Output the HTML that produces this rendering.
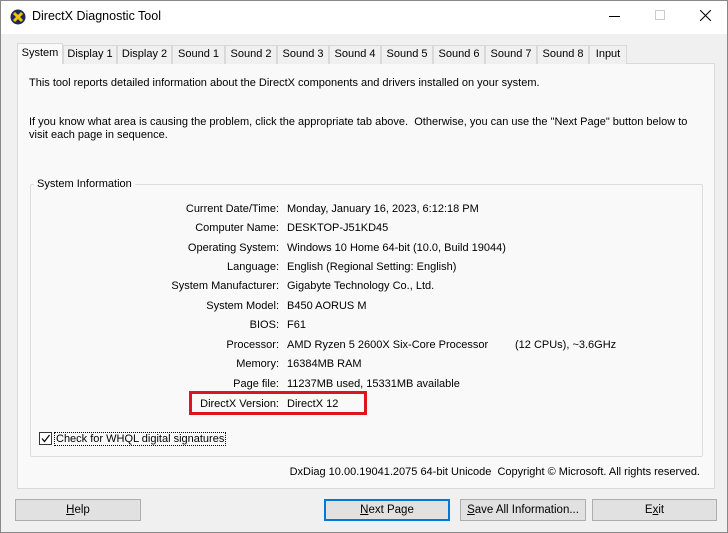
<!DOCTYPE html>
<html><head><style>
*{margin:0;padding:0;box-sizing:border-box}
body{width:728px;height:533px;background:#f0f0f0;font-family:"Liberation Sans",sans-serif;font-size:11px;color:#000;position:relative;overflow:hidden;border:1px solid #888}
.a{position:absolute;white-space:nowrap}
.title{position:absolute;left:0;top:0;width:726px;height:33px;background:#fff}
.tab{position:absolute;top:44px;height:19px;border:1px solid #d9d9d9;border-bottom:none;background:#f0f0f0;text-align:center;line-height:17px;font-size:11px}
.panel{position:absolute;left:16px;top:62px;width:698px;height:426px;background:#f9f9f9;border:1px solid #d9d9d9}
.grp{position:absolute;left:29px;top:183px;width:673px;height:273px;border:1px solid #dcdcdc;border-radius:2px}
.lab{position:absolute;right:448px;white-space:nowrap}
.val{position:absolute;left:286px;white-space:nowrap}
.btn{position:absolute;top:498px;height:22px;background:#e1e1e1;border:1px solid #adadad;text-align:center;line-height:20px;font-size:11.5px}
</style></head><body>
<div class="title"></div>
<svg class="a" style="left:9px;top:8px" width="16" height="16" viewBox="0 0 16 16"><circle cx="8" cy="8" r="7.5" fill="#1b2a5a"/><path d="M4 4L12 12M12 4L4 12" stroke="#f5c400" stroke-width="3"/></svg>
<div class="a" style="left:31px;top:8px;font-size:12.5px">DirectX Diagnostic Tool</div>
<div class="a" style="left:608px;top:15px;width:11px;height:1px;background:#000"></div>
<div class="a" style="left:654px;top:9px;width:10px;height:10px;border:1px solid #ccc"></div>
<svg class="a" style="left:699px;top:9px" width="11" height="11"><path d="M0 0L11 11M11 0L0 11" stroke="#000" stroke-width="1"/></svg>
<div class="panel"></div>
<div class="tab" style="left:16px;width:46px;top:42px;height:21px;background:#f9f9f9;line-height:19px">System</div>
<div class="tab" style="left:62px;width:54px">Display 1</div>
<div class="tab" style="left:116px;width:55px">Display 2</div>
<div class="tab" style="left:171px;width:53px">Sound 1</div>
<div class="tab" style="left:224px;width:52px">Sound 2</div>
<div class="tab" style="left:276px;width:52px">Sound 3</div>
<div class="tab" style="left:328px;width:52px">Sound 4</div>
<div class="tab" style="left:380px;width:52px">Sound 5</div>
<div class="tab" style="left:432px;width:52px">Sound 6</div>
<div class="tab" style="left:484px;width:52px">Sound 7</div>
<div class="tab" style="left:536px;width:52px">Sound 8</div>
<div class="tab" style="left:588px;width:38px">Input</div>
<div class="a" style="left:28px;top:76px">This tool reports detailed information about the DirectX components and drivers installed on your system.</div>
<div class="a" style="left:28px;top:115px;white-space:normal;width:670px;line-height:13px">If you know what area is causing the problem, click the appropriate tab above.&nbsp; Otherwise, you can use the "Next Page" button below to visit each page in sequence.</div>
<div class="grp"></div>
<div class="a" style="left:33px;top:177px;background:#f9f9f9;padding:0 3px">System Information</div>
<div class="lab" style="top:202px">Current Date/Time:</div><div class="val" style="top:202px">Monday, January 16, 2023, 6:12:18 PM</div>
<div class="lab" style="top:221px">Computer Name:</div><div class="val" style="top:221px">DESKTOP-J51KD45</div>
<div class="lab" style="top:241px">Operating System:</div><div class="val" style="top:241px">Windows 10 Home 64-bit (10.0, Build 19044)</div>
<div class="lab" style="top:260px">Language:</div><div class="val" style="top:260px">English (Regional Setting: English)</div>
<div class="lab" style="top:279px">System Manufacturer:</div><div class="val" style="top:279px">Gigabyte Technology Co., Ltd.</div>
<div class="lab" style="top:299px">System Model:</div><div class="val" style="top:299px">B450 AORUS M</div>
<div class="lab" style="top:318px">BIOS:</div><div class="val" style="top:318px">F61</div>
<div class="lab" style="top:338px">Processor:</div><div class="val" style="top:338px">AMD Ryzen 5 2600X Six-Core Processor</div><div class="val" style="top:338px;left:514px">(12 CPUs), ~3.6GHz</div>
<div class="lab" style="top:357px">Memory:</div><div class="val" style="top:357px">16384MB RAM</div>
<div class="lab" style="top:377px">Page file:</div><div class="val" style="top:377px">11237MB used, 15331MB available</div>
<div class="lab" style="top:397px">DirectX Version:</div><div class="val" style="top:397px">DirectX 12</div>
<div class="a" style="left:188px;top:390px;width:178px;height:24px;border:3px solid #e0141e"></div>
<div class="a" style="left:38px;top:431px;width:13px;height:13px;border:1px solid #333;background:#fff"></div>
<svg class="a" style="left:39px;top:432px" width="11" height="11"><path d="M2 5.5L4.5 8.5L9.5 2" stroke="#000" fill="none" stroke-width="1.2"/></svg>
<div class="a" style="left:53px;top:431px;border:1px dotted #000;padding:0 1px">Check for WHQL digital signatures</div>
<div class="a" style="right:27px;top:465px">DxDiag 10.00.19041.2075 64-bit Unicode&nbsp; Copyright © Microsoft. All rights reserved.</div>
<div class="btn" style="left:14px;width:126px"><u>H</u>elp</div>
<div class="btn" style="left:323px;width:126px;border:2px solid #0078d7;line-height:18px"><u>N</u>ext Page</div>
<div class="btn" style="left:459px;width:126px"><u>S</u>ave All Information...</div>
<div class="btn" style="left:591px;width:125px">E<u>x</u>it</div>
</body></html>
